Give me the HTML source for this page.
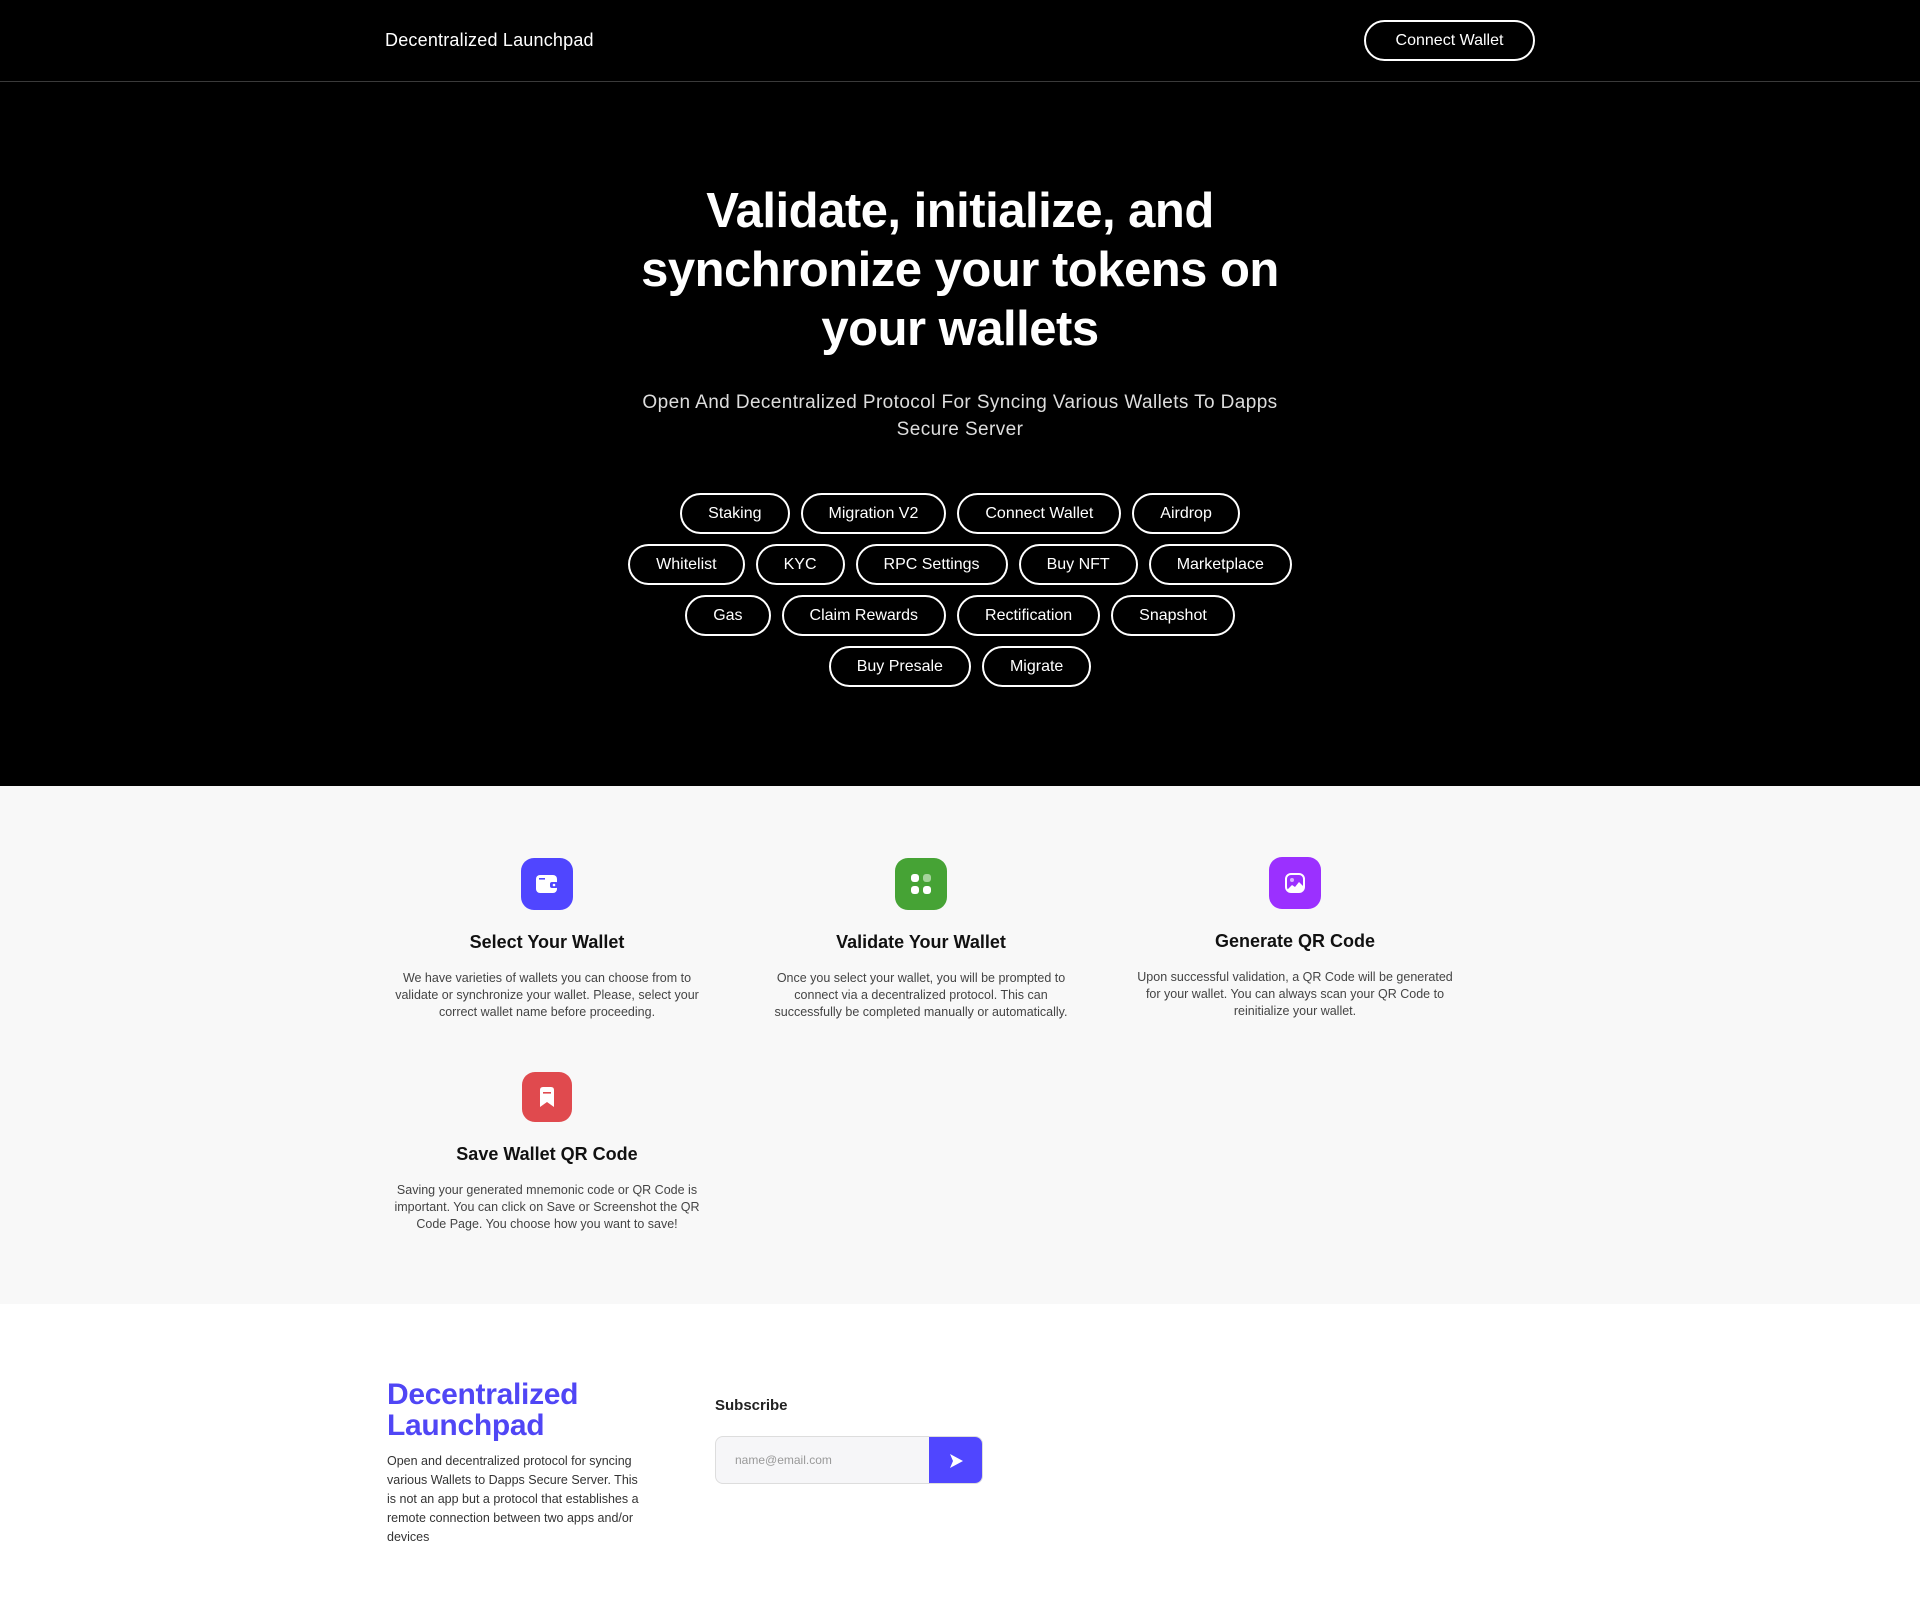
<!DOCTYPE html>
<html><head><meta charset="utf-8"><style>
*{box-sizing:border-box;margin:0;padding:0}
body{width:1920px;height:1608px;font-family:"Liberation Sans",sans-serif;background:#fff;overflow:hidden}
.nav{height:82px;background:#000;border-bottom:1px solid #3a3a3a;position:relative}
.logo{position:absolute;left:385px;top:30px;color:#fff;font-size:18px;letter-spacing:0.2px}
.cw{position:absolute;left:1364px;top:20px;width:171px;height:41px;border:2px solid #fff;border-radius:21px;color:#fff;font-size:16px;display:flex;align-items:center;justify-content:center}
.hero{background:#000;height:704px;text-align:center;color:#fff;padding-top:100px}
h1{font-size:49px;line-height:59px;font-weight:bold;letter-spacing:-0.5px}
.sub{margin-top:30px;font-size:19px;line-height:27px;color:#ddd;letter-spacing:0.4px}
.pills{width:700px;margin:50px auto 0;display:flex;flex-wrap:wrap;justify-content:center;gap:10px 11px}
.pill{height:41px;border:2px solid #fff;border-radius:21px;padding:0 26px;display:flex;align-items:center;font-size:16px;color:#fff}
.row{display:flex;justify-content:center;gap:11px;width:100%}
.gray{background:#f8f8f8;height:518px;position:relative}
.card{position:absolute;width:374px;text-align:center}
.ic{width:52px;height:52px;border-radius:13px;margin:0 auto;display:flex;align-items:center;justify-content:center}
.card h3{font-size:18px;font-weight:bold;color:#111;margin-top:22px}
.card p{font-size:12.5px;line-height:17px;color:#444;margin:17px auto 0;width:320px}
.foot{position:relative;height:304px}
</style></head><body>
<div class="nav"><div class="logo">Decentralized Launchpad</div><div class="cw">Connect Wallet</div></div>
<div class="hero">
<h1>Validate, initialize, and<br>synchronize your tokens on<br>your wallets</h1>
<div class="sub">Open And Decentralized Protocol For Syncing Various Wallets To Dapps<br>Secure Server</div>
<div class="pills">
<div class="row"><div class="pill">Staking</div><div class="pill">Migration V2</div><div class="pill">Connect Wallet</div><div class="pill">Airdrop</div></div>
<div class="row"><div class="pill">Whitelist</div><div class="pill">KYC</div><div class="pill">RPC Settings</div><div class="pill">Buy NFT</div><div class="pill">Marketplace</div></div>
<div class="row"><div class="pill">Gas</div><div class="pill">Claim Rewards</div><div class="pill">Rectification</div><div class="pill">Snapshot</div></div>
<div class="row"><div class="pill">Buy Presale</div><div class="pill">Migrate</div></div>
</div>
</div>
<div class="gray">
<div class="card" style="left:360px;top:72px"><div class="ic" style="background:#5046ff"><svg width="24" height="22" viewBox="0 0 24 22"><rect x="1" y="2" width="21" height="18" rx="4" fill="#fff"/><rect x="4" y="5" width="6" height="1.6" fill="#5046ff"/><rect x="15" y="9" width="8" height="6" rx="2" fill="#5046ff"/><circle cx="19" cy="12" r="1.3" fill="#fff"/></svg></div><h3>Select Your Wallet</h3><p>We have varieties of wallets you can choose from to validate or synchronize your wallet. Please, select your correct wallet name before proceeding.</p></div>
<div class="card" style="left:734px;top:72px"><div class="ic" style="background:#46a335"><svg width="24" height="24" viewBox="0 0 24 24"><rect x="2" y="2" width="8" height="8" rx="3" fill="#fff"/><rect x="14" y="2" width="8" height="8" rx="3" fill="#a5d49b"/><rect x="2" y="14" width="8" height="8" rx="3" fill="#fff"/><rect x="14" y="14" width="8" height="8" rx="3" fill="#fff"/></svg></div><h3>Validate Your Wallet</h3><p>Once you select your wallet, you will be prompted to connect via a decentralized protocol. This can successfully be completed manually or automatically.</p></div>
<div class="card" style="left:1108px;top:71px"><div class="ic" style="background:#9b30ff"><svg width="22" height="22" viewBox="0 0 22 22"><rect x="2" y="2" width="18" height="18" rx="5" fill="none" stroke="#fff" stroke-width="2"/><circle cx="8" cy="8" r="2" fill="#d9b3ff"/><path d="M3 18 L8 13 L11 15 L15 10 L19 14 L19 19 L3 19Z" fill="#fff"/></svg></div><h3>Generate QR Code</h3><p style="width:330px">Upon successful validation, a QR Code will be generated for your wallet. You can always scan your QR Code to reinitialize your wallet.</p></div>
<div class="card" style="left:360px;top:286px"><div class="ic" style="background:#e04a4e;width:50px;height:50px"><svg width="18" height="22" viewBox="0 0 18 22"><path d="M2 4 Q2 1 5 1 L13 1 Q16 1 16 4 L16 21 L9 16 L2 21Z" fill="#fff"/><rect x="5" y="6" width="8" height="1.6" fill="#e04a4e"/></svg></div><h3>Save Wallet QR Code</h3><p>Saving your generated mnemonic code or QR Code is important. You can click on Save or Screenshot the QR Code Page. You choose how you want to save!</p></div>
</div>
<div class="foot">
<div style="position:absolute;left:387px;top:75px;color:#5046f5;font-size:30px;font-weight:bold;line-height:31px;letter-spacing:-0.3px">Decentralized<br>Launchpad</div>
<div style="position:absolute;left:387px;top:148px;width:260px;font-size:12.5px;line-height:19px;color:#333">Open and decentralized protocol for syncing various Wallets to Dapps Secure Server. This is not an app but a protocol that establishes a remote connection between two apps and/or devices</div>
<div style="position:absolute;left:715px;top:93px;font-size:15px;font-weight:bold;color:#222">Subscribe</div>
<div style="position:absolute;left:715px;top:132px;width:268px;height:48px;border:1px solid #ddd;border-radius:8px;background:#f6f6f8;overflow:hidden">
<div style="position:absolute;left:19px;top:16px;font-size:12px;color:#999">name@email.com</div>
<div style="position:absolute;right:0;top:0;width:53px;height:48px;background:#5046ff;display:flex;align-items:center;justify-content:center"><svg width="16" height="16" viewBox="0 0 16 16"><path d="M2 1 L15 8 L2 15 L5 8Z" fill="#fff"/></svg></div>
</div>
</div>
</body></html>
